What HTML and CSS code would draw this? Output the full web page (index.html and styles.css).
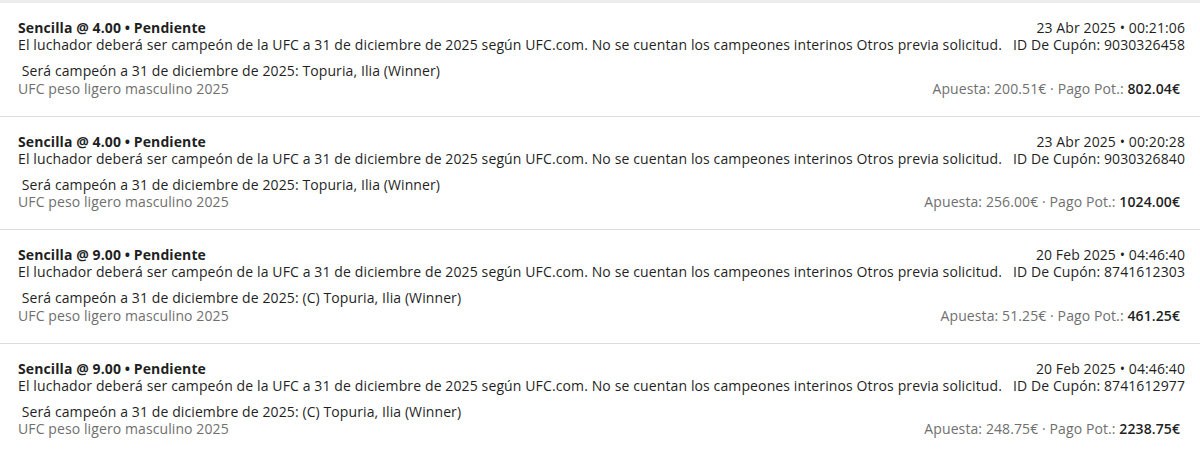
FILE: index.html
```html
<!DOCTYPE html>
<html lang="es">
<head>
<meta charset="utf-8">
<title>Apuestas</title>
<link rel="stylesheet" href="styles.css">
</head>
<body>
<div class="list">
  <div class="bet">
    <div class="row">
      <span class="title">Sencilla @ 4.00 • Pendiente</span>
      <span class="date">23 Abr 2025 • 00:21:06</span>
    </div>
    <div class="row">
      <span class="desc">El luchador deberá ser campeón de la UFC a 31 de diciembre de 2025 según UFC.com. No se cuentan los campeones interinos Otros previa solicitud.</span>
      <span class="coupon">ID De Cupón: 9030326458</span>
    </div>
    <div class="selection">&nbsp;Será campeón a 31 de diciembre de 2025: Topuria, Ilia (Winner)</div>
    <div class="row">
      <span class="market">UFC peso ligero masculino 2025</span>
      <span class="stake">Apuesta: 200.51€ · Pago Pot.: <b>802.04€</b></span>
    </div>
  </div>
  <div class="bet">
    <div class="row">
      <span class="title">Sencilla @ 4.00 • Pendiente</span>
      <span class="date">23 Abr 2025 • 00:20:28</span>
    </div>
    <div class="row">
      <span class="desc">El luchador deberá ser campeón de la UFC a 31 de diciembre de 2025 según UFC.com. No se cuentan los campeones interinos Otros previa solicitud.</span>
      <span class="coupon">ID De Cupón: 9030326840</span>
    </div>
    <div class="selection">&nbsp;Será campeón a 31 de diciembre de 2025: Topuria, Ilia (Winner)</div>
    <div class="row">
      <span class="market">UFC peso ligero masculino 2025</span>
      <span class="stake">Apuesta: 256.00€ · Pago Pot.: <b>1024.00€</b></span>
    </div>
  </div>
  <div class="bet">
    <div class="row">
      <span class="title">Sencilla @ 9.00 • Pendiente</span>
      <span class="date">20 Feb 2025 • 04:46:40</span>
    </div>
    <div class="row">
      <span class="desc">El luchador deberá ser campeón de la UFC a 31 de diciembre de 2025 según UFC.com. No se cuentan los campeones interinos Otros previa solicitud.</span>
      <span class="coupon">ID De Cupón: 8741612303</span>
    </div>
    <div class="selection">&nbsp;Será campeón a 31 de diciembre de 2025: (C) Topuria, Ilia (Winner)</div>
    <div class="row">
      <span class="market">UFC peso ligero masculino 2025</span>
      <span class="stake">Apuesta: 51.25€ · Pago Pot.: <b>461.25€</b></span>
    </div>
  </div>
  <div class="bet">
    <div class="row">
      <span class="title">Sencilla @ 9.00 • Pendiente</span>
      <span class="date">20 Feb 2025 • 04:46:40</span>
    </div>
    <div class="row">
      <span class="desc">El luchador deberá ser campeón de la UFC a 31 de diciembre de 2025 según UFC.com. No se cuentan los campeones interinos Otros previa solicitud.</span>
      <span class="coupon">ID De Cupón: 8741612977</span>
    </div>
    <div class="selection">&nbsp;Será campeón a 31 de diciembre de 2025: (C) Topuria, Ilia (Winner)</div>
    <div class="row">
      <span class="market">UFC peso ligero masculino 2025</span>
      <span class="stake">Apuesta: 248.75€ · Pago Pot.: <b>2238.75€</b></span>
    </div>
  </div>
</div>
</body>
</html>
```
FILE: styles.css
```css
html, body {
  margin: 0;
  padding: 0;
  background: #ffffff;
}
body {
  font-family: "Open Sans", "Noto Sans", sans-serif;
  font-size: 14px;
  letter-spacing: 0.1px;
  color: #1f1f1f;
}
.list {
  border-top: 3px solid #ececec;
}
.bet {
  height: 113.5px;
  box-sizing: border-box;
  padding: 16px 15px 0 18px;
  border-bottom: 1.5px solid #dcdcdc;
}
.row {
  display: flex;
  justify-content: space-between;
  align-items: baseline;
  gap: 5px;
  line-height: 17px;
  white-space: nowrap;
}
.row > span {
  flex-shrink: 0;
}
.desc {
  letter-spacing: 0.12px;
}
.title {
  font-weight: 700;
}
.selection {
  margin-top: 9px;
  line-height: 17.5px;
  white-space: nowrap;
}
.market {
  color: #6f6f6f;
}
.stake {
  color: #6f6f6f;
  padding-right: 5px;
}
.stake b {
  color: #1f1f1f;
  font-weight: 600;
}
```
